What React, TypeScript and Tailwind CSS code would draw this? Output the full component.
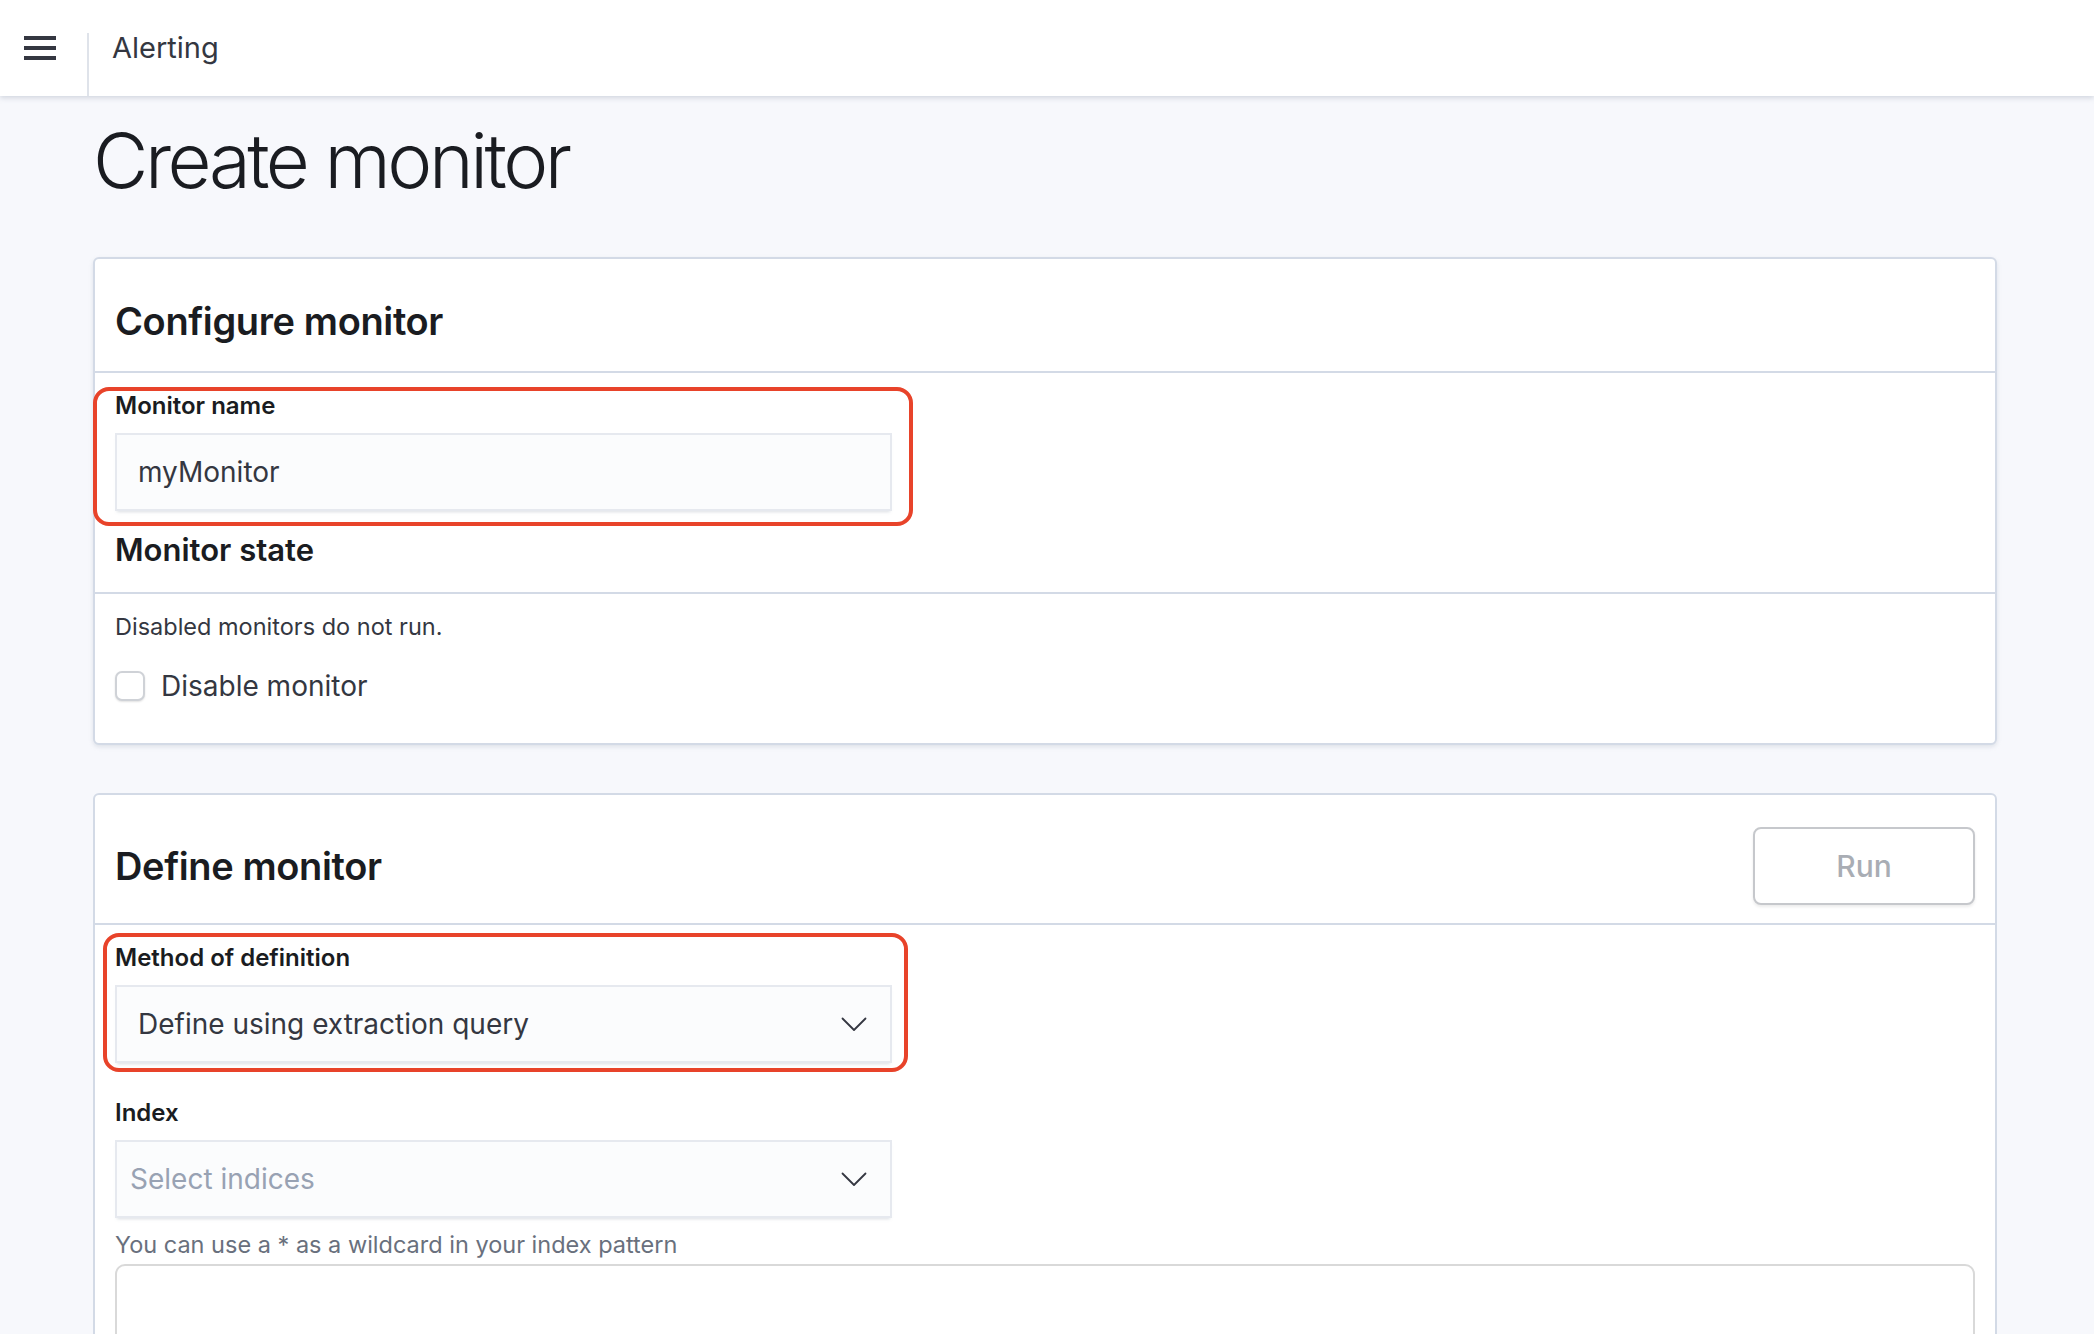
import { ReactNode } from 'react'

function Chevron() {
  return (
    <svg width="26" height="15" viewBox="0 0 26 15" fill="none" className="shrink-0">
      <polyline points="1.5,1.5 13,13 24.5,1.5" stroke="#343741" strokeWidth="1.8" strokeLinecap="round" strokeLinejoin="round" />
    </svg>
  )
}

function Highlight({ className }: { className: string }) {
  return <div className={`pointer-events-none absolute rounded-[16px] border-4 border-[#e8432a] ${className}`} />
}

function Label({ children }: { children: ReactNode }) {
  return <div className="text-[24px] leading-[28px] font-semibold text-[#1a1c21]">{children}</div>
}

function Field({ label, children }: { label: string; children: ReactNode }) {
  return (
    <div className="flex w-[777px] flex-col gap-[13px]">
      <Label>{label}</Label>
      {children}
    </div>
  )
}

const inputBox =
  'flex h-[78px] items-center justify-between border-2 border-[#e6e9ef] bg-[#fbfcfd] shadow-[0_3px_3px_-2px_rgba(152,162,179,0.35)]'

export default function App() {
  return (
    <div className="h-[1334px] overflow-hidden bg-[#f7f8fc] font-['Inter','Liberation_Sans',sans-serif] text-[#343741]">
      <header className="relative z-10 flex h-[96px] items-stretch bg-white shadow-[0_2px_5px_rgba(152,162,179,0.4)]">
        <div className="flex items-center pl-6">
          <div className="flex w-[32px] flex-col gap-[6px]">
            <span className="h-[4px] bg-[#343741]" />
            <span className="h-[4px] bg-[#343741]" />
            <span className="h-[4px] bg-[#343741]" />
          </div>
        </div>
        <div className="ml-[31px] h-[63px] w-[2px] self-end bg-[#dfe3ea]" />
        <div className="ml-[23px] flex items-center text-[29px] text-[#343741]">Alerting</div>
      </header>

      <main className="pl-[93px] pr-[97px]">
        <h1 className="pt-[26px] pb-[59px] text-[76px] leading-[76px] font-light tracking-[-0.045em] text-[#1a1c21]">
          Create monitor
        </h1>

        <section className="rounded-md border-2 border-[#d3dae6] bg-white shadow-[0_2px_4px_rgba(152,162,179,0.25)]">
          <div className="border-b-2 border-[#d3dae6] px-5 pt-8 pb-5">
            <h2 className="text-[38px] leading-[60px] font-semibold tracking-[-0.01em] text-[#1a1c21]">Configure monitor</h2>
          </div>
          <div className="border-b-2 border-[#d3dae6] px-5 pt-[19px] pb-[23px]">
            <div className="relative w-fit">
              <Field label="Monitor name">
                <div className={`${inputBox} pl-[21px]`}>
                  <span className="text-[28px] text-[#343741]">myMonitor</span>
                </div>
              </Field>
              <Highlight className="-top-[5px] -left-[22px] -right-[21px] -bottom-[15px]" />
            </div>
            <h3 className="mt-[20px] text-[31px] leading-[38px] font-semibold text-[#1a1c21]">Monitor state</h3>
          </div>
          <div className="px-5 pt-[19px] pb-[40px]">
            <p className="text-[23.5px] leading-[28px] text-[#343741]">Disabled monitors do not run.</p>
            <label className="mt-[28px] flex h-[34px] items-center gap-[16px]">
              <span className="h-[30px] w-[30px] rounded-[7px] border-2 border-[#cfd2d7] bg-white shadow-[0_1px_2px_rgba(0,0,0,0.12)]" />
              <span className="text-[28px] text-[#343741]">Disable monitor</span>
            </label>
          </div>
        </section>

        <section className="mt-[48px] rounded-md border-2 border-[#d3dae6] bg-white">
          <div className="flex items-center justify-between border-b-2 border-[#d3dae6] px-5 pt-8 pb-[18px]">
            <h2 className="text-[38px] leading-[60px] font-semibold tracking-[-0.01em] text-[#1a1c21]">Define monitor</h2>
            <button className="flex h-[78px] w-[222px] items-center justify-center rounded-[8px] border-2 border-[#c6c8cc] bg-white text-[30px] font-medium text-[#a9adb4] shadow-[0_2px_3px_rgba(0,0,0,0.08)]">
              Run
            </button>
          </div>
          <div className="px-5 pt-[19px]">
            <div className="relative w-fit">
              <Field label="Method of definition">
                <div className={`${inputBox} pl-[21px] pr-[23px]`}>
                  <span className="text-[28px] text-[#343741]">Define using extraction query</span>
                  <Chevron />
                </div>
              </Field>
              <Highlight className="-top-[11px] -left-[12px] -right-[16px] -bottom-[9px]" />
            </div>
            <div className="mt-[36px]">
              <Field label="Index">
                <div className={`${inputBox} pl-[13px] pr-[23px]`}>
                  <span className="text-[28px] text-[#98a2b3]">Select indices</span>
                  <Chevron />
                </div>
              </Field>
              <p className="mt-[13px] text-[23.5px] leading-[28px] text-[#69707d]">
                You can use a * as a wildcard in your index pattern
              </p>
            </div>
            <div className="mt-[5px] h-[200px] rounded-t-[10px] border-2 border-[#d9d9d9] bg-white" />
          </div>
        </section>
      </main>
    </div>
  )
}
